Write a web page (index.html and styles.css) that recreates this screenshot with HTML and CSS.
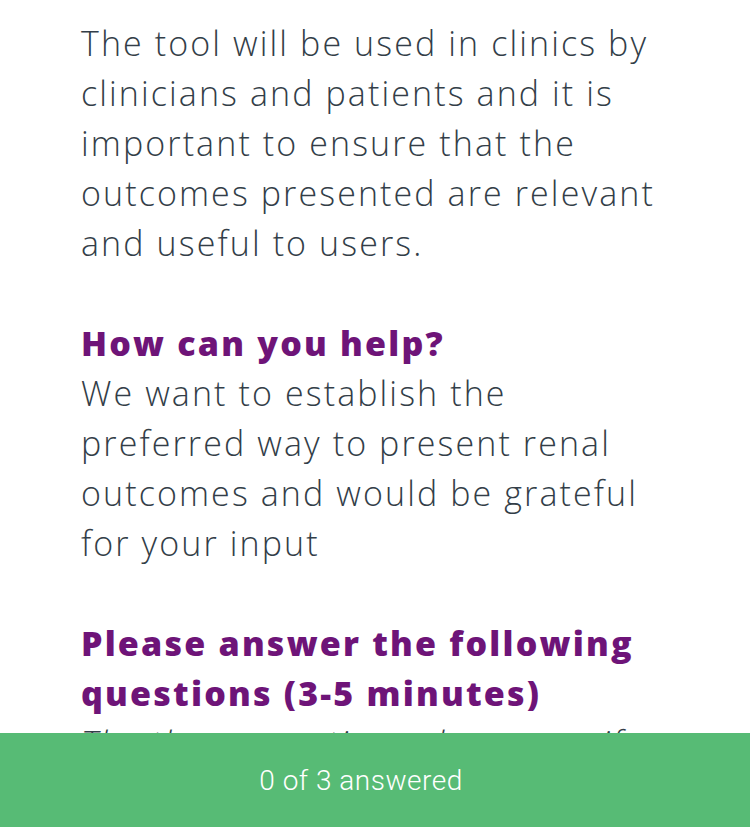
FILE: index.html
```html
<!DOCTYPE html>
<html lang="en">
<head>
    <meta charset="UTF-8">
    <meta name="viewport" content="width=device-width, initial-scale=1.0">
    <title>Renal outcomes survey</title>
    <link rel="stylesheet" href="styles.css">
</head>
<body>
    <div class="page">
        <div class="content">
            <div class="container">
                <p>The tool will be used in clinics by clinicians and patients and it is important to ensure that the outcomes presented are relevant and useful to users.</p>

                <h2>How can you help?</h2>
                <p>We want to establish the preferred way to present renal outcomes and would be grateful for your input</p>

                <h2>Please answer the following questions (3-5 minutes)</h2>
                <p class="note">The three questions show even if you do not know</p>
            </div>
        </div>

        <div class="progress">0 of 3 answered</div>
    </div>
</body>
</html>
```

FILE: styles.css
```css
body {
    margin: 0;
    font-family: "Open Sans", Arial, sans-serif;
    background: #ffffff;
    color: #333e48;
    overflow: hidden;
}
.page {
    height: 100vh;
    display: flex;
    flex-direction: column;
}
.content {
    flex: 1;
    overflow: hidden;
}
.container {
    padding: 18px 0 0 81px;
    width: 585px;
}
p {
    margin: 0 0 50px 0;
    font-size: 34px;
    font-weight: 300;
    line-height: 50px;
    letter-spacing: 2.1px;
}
h2 {
    margin: 0;
    font-size: 34px;
    font-weight: 800;
    line-height: 50px;
    color: #6e1478;
    letter-spacing: 2.2px;
}
p.note {
    font-style: italic;
}
.progress {
    flex: 0 0 94px;
    background-color: #57bb75;
    color: #ffffff;
    font-family: Roboto, Arial, sans-serif;
    font-weight: 300;
    font-size: 28px;
    letter-spacing: 0.5px;
    display: flex;
    align-items: center;
    justify-content: center;
    padding-right: 28px;
}
```
